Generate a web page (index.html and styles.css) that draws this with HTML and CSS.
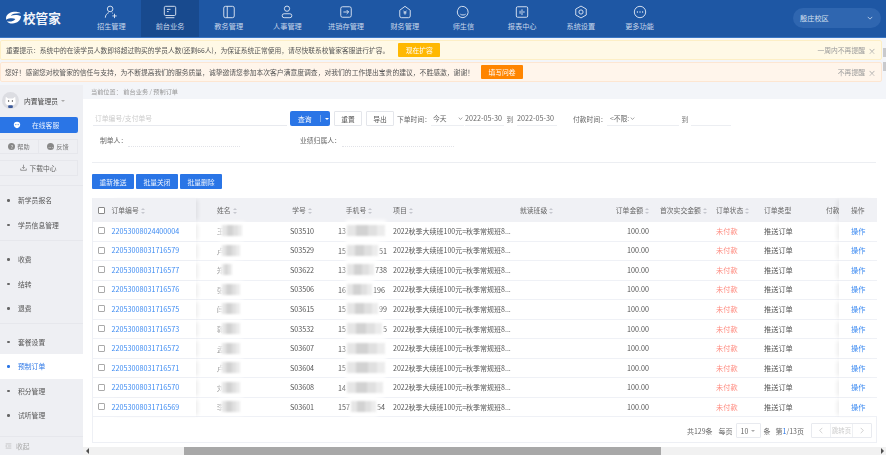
FILE: index.html
```html
<!DOCTYPE html>
<html lang="zh-CN">
<head>
<meta charset="utf-8">
<title>预制订单</title>
<link rel="stylesheet" href="styles.css">
</head>
<body>
<div class="app">
  <header class="topbar">
    <div class="logo">
      <svg class="logo-mark" viewBox="0 0 18 14"><path d="M1 7C2 2.500 7 .5 13 1c2 .2 3.500.8 4 1.500C13 2 8 2.500 6 5c3-1 8-1.200 11 .5C17 10 13 13.500 8 13.500 5 13.500 3 12.500 2 11c3 .8 7 .3 9-2.500C8 7.500 4 7.800 1 9.500z" fill="#fff"/></svg>
      <span class="logo-text">校管家</span>
    </div>
    <nav class="nav">
      <a class="nav-item"><svg viewBox="0 0 16 16"><circle cx="7" cy="4.500" r="3.200"/><path d="M1.500 14.500c0-3 2-5 4-5.800M10 9.500c-.3-.4-.6-.7-1-.9M9.500 12.500h5M12 10v5"/></svg><span>招生管理</span></a>
      <a class="nav-item active"><svg viewBox="0 0 16 16"><rect x="1.500" y="1.500" width="13" height="10.500" rx="1.500"/><path d="M4.500 5h4M4.500 7.500h2M3 14.500h10"/></svg><span>前台业务</span></a>
      <a class="nav-item"><svg viewBox="0 0 16 16"><rect x="2" y="1.500" width="12" height="13" rx="2"/><path d="M6 1.500v13"/></svg><span>教务管理</span></a>
      <a class="nav-item"><svg viewBox="0 0 16 16"><circle cx="8" cy="4.200" r="3"/><rect x="2.500" y="10" width="11" height="4.500" rx="2.200"/></svg><span>人事管理</span></a>
      <a class="nav-item"><svg viewBox="0 0 16 16"><rect x="2" y="2" width="12" height="12" rx="2"/><path d="M5 8h6M8.800 5.800 11 8l-2.200 2.200"/></svg><span>进销存管理</span></a>
      <a class="nav-item"><svg viewBox="0 0 16 16"><path d="M8 1.500 14 6v6.500a2 2 0 0 1-2 2H4a2 2 0 0 1-2-2V6z"/><path d="M6.300 6.500 8 8.500l1.700-2M6.300 9h3.400M8 8.500V11"/></svg><span>财务管理</span></a>
      <a class="nav-item"><svg viewBox="0 0 16 16"><path d="M3.500 2.800A6.500 6.500 0 1 1 8 14.500 6.500 6.500 0 0 1 1.500 8c0-1.200.4-2.300 1-3.200z"/><path d="M5 10.500c1.500 1.200 4.500 1.200 6 0"/></svg><span>师生信</span></a>
      <a class="nav-item"><svg viewBox="0 0 16 16"><rect x="1.500" y="2" width="13" height="12" rx="1.500"/><path d="M5.800 6.500v3.500M8 5v6.500M10.200 7v2"/></svg><span>报表中心</span></a>
      <a class="nav-item"><svg viewBox="0 0 16 16"><path d="M8 1.200 14 4.600v6.800L8 14.800 2 11.400V4.600z"/><circle cx="8" cy="8" r="2.400"/></svg><span>系统设置</span></a>
      <a class="nav-item"><svg viewBox="0 0 16 16"><circle cx="8" cy="8" r="6.500"/><path class="dots" d="M5 8h.01M8 8h.01M11 8h.01"/></svg><span>更多功能</span></a>
    </nav>
    <div class="campus"><span>殷庄校区</span><svg viewBox="0 0 8 5"><path d="M1 1l3 3 3-3"/></svg></div>
  </header>

  <section class="notices">
    <div class="notice-list">
      <div class="notice notice-yellow">
        <span>重要提示：系统中的在读学员人数即将超过购买的学员人数(还剩66人)，为保证系统正常使用，请尽快联系校管家客服进行扩容。</span>
        <button class="notice-btn btn-yellow">现在扩容</button>
        <span class="notice-close">一周内不再提醒<i>×</i></span>
      </div>
      <div class="notice notice-orange">
        <span>您好！感谢您对校管家的信任与支持，为不断提高我们的服务质量，诚挚邀请您参加本次客户满意度调查，对我们的工作提出宝贵的建议，不胜感激，谢谢！</span>
        <button class="notice-btn btn-orange">填写问卷</button>
        <span class="notice-close">不再提醒<i>×</i></span>
      </div>
    </div>
    <div class="notice-scroll"><i></i><i></i></div>
  </section>

  <div class="workspace">
    <aside class="side">
      <div class="user">
        <svg class="avatar" viewBox="0 0 18 18"><circle cx="9" cy="9" r="9" fill="#dcdde2"/><path d="M4 5l2.500 2h5L14 5l.5 6c0 2-2.500 3-5.500 3s-5.500-1-5.500-3z" fill="#fff"/><circle cx="7" cy="9.500" r=".7" fill="#333"/><circle cx="11" cy="9.500" r=".7" fill="#333"/><rect x="6.500" y="14" width="5" height="3" rx="1" fill="#3c5a9a"/></svg>
        <span class="user-name">内置管理员</span><i class="caret-down"></i>
      </div>
      <button class="service"><svg viewBox="0 0 10 10"><path d="M5 .8a4 4 0 0 1 4 4c0 2.300-1.800 4.200-4 4.200S1 7.100 1 4.800a4 4 0 0 1 4-4z" fill="#fff"/><circle cx="3.600" cy="4.500" r=".7" fill="#2a75e6"/><circle cx="6.400" cy="4.500" r=".7" fill="#2a75e6"/></svg><span>在线客服</span></button>
      <div class="help-row">
        <span class="help-cell"><i class="dot-icon">?</i>帮助</span>
        <span class="help-cell"><i class="dot-icon">…</i>反馈</span>
      </div>
      <div class="download"><svg viewBox="0 0 10 10"><path d="M5 1v5M3 4.500 5 6.500l2-2M1 6.500V9h8V6.500"/></svg>下载中心</div>
      <ul class="menu menu-first">
        <li>新学员报名</li>
        <li>学员信息管理</li>
      </ul>
      <ul class="menu">
        <li>收费</li>
        <li>结转</li>
        <li>退费</li>
      </ul>
      <ul class="menu menu-last">
        <li>套餐设置</li>
        <li class="current">预制订单</li>
        <li>积分管理</li>
        <li>试听管理</li>
      </ul>
      <div class="collapse"><svg viewBox="0 0 10 8"><path d="M1 1h8M4 4h5M1 7h8M2.500 2.800 1 4l1.500 1.200"/></svg>收起</div>
    </aside>

    <main class="main">
      <div class="crumbs">当前位置： 前台业务 / 预制订单</div>
      <div class="panel">
        <div class="filter-row">
          <div class="search-input">订单编号/支付单号</div>
          <button class="btn-query"><span>查询</span><i class="sep"></i><i class="caret-white"></i></button>
          <button class="btn-plain">重置</button>
          <button class="btn-plain">导出</button>
          <span class="f-label f-order">下单时间：</span>
          <span class="f-select f-today">今天<svg viewBox="0 0 8 5"><path d="M1 1l3 3 3-3"/></svg></span>
          <span class="f-date">2022-05-30</span>
          <span class="f-to">到</span>
          <span class="f-date f-date2">2022-05-30</span>
          <span class="f-label f-pay">付款时间：</span>
          <span class="f-select f-any">&lt;不限:<svg viewBox="0 0 8 5"><path d="M1 1l3 3 3-3"/></svg></span>
          <span class="f-to f-to2">到</span>
          <span class="f-end"></span>
        </div>
        <div class="filter-row2">
          <span class="f-label f-maker">制单人：</span><span class="dash"></span>
          <span class="f-label f-owner">业绩归属人：</span><span class="dash"></span>
        </div>
        <div class="actions">
          <button class="btn-blue">重新推送</button>
          <button class="btn-blue">批量关闭</button>
          <button class="btn-blue">批量删除</button>
        </div>
        <div class="table-box">
          <table class="grid">
            <colgroup><col class="c1"><col class="c2"><col class="c3"><col class="c4"><col class="c5"><col class="c6"><col class="c7"><col class="c8"><col class="c9"><col class="c10"><col class="c11"><col class="c12"><col class="c13"></colgroup>
            <thead>
              <tr>
                <th class="chk"><i class="box dark"></i></th>
                <th class="no fix-l">订单编号<i class="sort"></i></th>
                <th class="nm">姓名<i class="sort"></i></th>
                <th class="ctr">学号<i class="sort"></i></th>
                <th class="ctr">手机号<i class="sort"></i></th>
                <th class="pj">项目<i class="sort"></i></th>
                <th>就读班级<i class="sort"></i></th>
                <th class="rt">订单金额<i class="sort"></i></th>
                <th class="fp">首次实交金额<i class="sort"></i></th>
                <th>订单状态<i class="sort"></i></th>
                <th>订单类型</th>
                <th>付款时间</th>
                <th class="op fix-r">操作</th>
              </tr>
            </thead>
            <tbody>
              <tr><td class="chk"><i class="box"></i></td><td class="no fix-l"><a>22053008024400004</a></td><td class="nm">王<i class="mask w18"></i></td><td class="ctr">S03510</td><td class="ph">13<i class="mask w36"></i></td><td class="pj">2022秋季大续班100元=秋季常规班8...</td><td></td><td class="rt">100.00</td><td></td><td class="st">未付款</td><td>推送订单</td><td></td><td class="op fix-r"><a>操作</a></td></tr>
              <tr><td class="chk"><i class="box"></i></td><td class="no fix-l"><a>22053008031716579</a></td><td class="nm">卢<i class="mask w16"></i></td><td class="ctr">S03529</td><td class="ph">15<i class="mask w28"></i>51</td><td class="pj">2022秋季大续班100元=秋季常规班8...</td><td></td><td class="rt">100.00</td><td></td><td class="st">未付款</td><td>推送订单</td><td></td><td class="op fix-r"><a>操作</a></td></tr>
              <tr><td class="chk"><i class="box"></i></td><td class="no fix-l"><a>22053008031716577</a></td><td class="nm">郑<i class="mask w10"></i></td><td class="ctr">S03622</td><td class="ph">13<i class="mask w24"></i>738</td><td class="pj">2022秋季大续班100元=秋季常规班8...</td><td></td><td class="rt">100.00</td><td></td><td class="st">未付款</td><td>推送订单</td><td></td><td class="op fix-r"><a>操作</a></td></tr>
              <tr><td class="chk"><i class="box"></i></td><td class="no fix-l"><a>22053008031716576</a></td><td class="nm">张<i class="mask w16"></i></td><td class="ctr">S03506</td><td class="ph">16<i class="mask w22"></i>196</td><td class="pj">2022秋季大续班100元=秋季常规班8...</td><td></td><td class="rt">100.00</td><td></td><td class="st">未付款</td><td>推送订单</td><td></td><td class="op fix-r"><a>操作</a></td></tr>
              <tr><td class="chk"><i class="box"></i></td><td class="no fix-l"><a>22053008031716575</a></td><td class="nm">闫<i class="mask w16"></i></td><td class="ctr">S03615</td><td class="ph">15<i class="mask w28"></i>99</td><td class="pj">2022秋季大续班100元=秋季常规班8...</td><td></td><td class="rt">100.00</td><td></td><td class="st">未付款</td><td>推送订单</td><td></td><td class="op fix-r"><a>操作</a></td></tr>
              <tr><td class="chk"><i class="box"></i></td><td class="no fix-l"><a>22053008031716573</a></td><td class="nm">郭<i class="mask w16"></i></td><td class="ctr">S03532</td><td class="ph">15<i class="mask w32"></i>5</td><td class="pj">2022秋季大续班100元=秋季常规班8...</td><td></td><td class="rt">100.00</td><td></td><td class="st">未付款</td><td>推送订单</td><td></td><td class="op fix-r"><a>操作</a></td></tr>
              <tr><td class="chk"><i class="box"></i></td><td class="no fix-l"><a>22053008031716572</a></td><td class="nm">孟<i class="mask w16"></i></td><td class="ctr">S03607</td><td class="ph">13<i class="mask w36"></i></td><td class="pj">2022秋季大续班100元=秋季常规班8...</td><td></td><td class="rt">100.00</td><td></td><td class="st">未付款</td><td>推送订单</td><td></td><td class="op fix-r"><a>操作</a></td></tr>
              <tr><td class="chk"><i class="box"></i></td><td class="no fix-l"><a>22053008031716571</a></td><td class="nm">卢<i class="mask w16"></i></td><td class="ctr">S03604</td><td class="ph">15<i class="mask w36"></i></td><td class="pj">2022秋季大续班100元=秋季常规班8...</td><td></td><td class="rt">100.00</td><td></td><td class="st">未付款</td><td>推送订单</td><td></td><td class="op fix-r"><a>操作</a></td></tr>
              <tr><td class="chk"><i class="box"></i></td><td class="no fix-l"><a>22053008031716570</a></td><td class="nm">刘<i class="mask w16"></i></td><td class="ctr">S03608</td><td class="ph">14<i class="mask w34"></i></td><td class="pj">2022秋季大续班100元=秋季常规班8...</td><td></td><td class="rt">100.00</td><td></td><td class="st">未付款</td><td>推送订单</td><td></td><td class="op fix-r"><a>操作</a></td></tr>
              <tr><td class="chk"><i class="box"></i></td><td class="no fix-l"><a>22053008031716569</a></td><td class="nm">李<i class="mask w16"></i></td><td class="ctr">S03601</td><td class="ph">157<i class="mask w22"></i>54</td><td class="pj">2022秋季大续班100元=秋季常规班8...</td><td></td><td class="rt">100.00</td><td></td><td class="st">未付款</td><td>推送订单</td><td></td><td class="op fix-r"><a>操作</a></td></tr>
            </tbody>
          </table>
          <div class="pager">
            <span>共129条</span>
            <span class="pg-per">每页</span>
            <span class="pg-size">10<i class="caret-down"></i></span>
            <span class="pg-unit">条</span>
            <span class="pg-page">第<b>1</b>/13页</span>
            <span class="pg-nav">
              <i class="pg-arrow"><svg viewBox="0 0 6 10"><path d="M5 1 1 5l4 4"/></svg></i>
              <i class="pg-jump">跳转页</i>
              <i class="pg-arrow"><svg viewBox="0 0 6 10"><path d="M1 1l4 4-4 4"/></svg></i>
            </span>
          </div>
        </div>
      </div>
      <div class="hscroll">
        <svg class="hs-arrow" viewBox="0 0 6 8"><path d="M5 0v8L1 4z"/></svg>
        <div class="hs-track"><div class="hs-thumb"></div></div>
        <svg class="hs-arrow" viewBox="0 0 6 8"><path d="M1 0v8l4-4z"/></svg>
      </div>
    </main>
  </div>
</div>
</body>
</html>
```

FILE: styles.css
```css
* { box-sizing: border-box; }
html, body { margin: 0; padding: 0; height: 100%; overflow: hidden; }
body {
  font-family: "Noto Sans CJK SC", "Noto Sans", "Liberation Sans", sans-serif;
  font-size: 7.2px;
  color: #555;
  background: #f3f5f9;
}
i { font-style: normal; }
button { font-family: inherit; padding: 0; cursor: pointer; }
ul { list-style: none; margin: 0; padding: 0; }

.app { display: flex; flex-direction: column; height: 455px; filter: blur(.4px); }

/* top bar */
.topbar {
  display: flex; align-items: stretch; height: 37.500px; flex: none;
  background: #1e57a4; border-bottom: 1px solid #3a76c4; color: #fff;
}
.logo { width: 82px; flex: none; display: flex; align-items: center; padding-left: 5px; padding-bottom: 1px; }
.logo-mark { width: 17px; height: 13px; }
.logo-text { font-size: 12.600px; font-weight: 700; margin-left: 1px; color: #f2f5fa; }
.nav { display: flex; }
.nav-item {
  width: 58.700px; display: flex; flex-direction: column; align-items: center;
  padding-top: 5px; color: #c7d6ea; font-size: 7.200px; line-height: 10px;
}
.nav-item svg {
  width: 14px; height: 14px; margin-bottom: 2px;
  fill: none; stroke: #e8eef7; stroke-width: 1;
}
.nav-item svg .dots { stroke-width: 1.500; stroke-linecap: round; }
.nav-item.active { background: #184a8e; }
.campus {
  width: 88px; height: 20px; margin: 8px 0 0 auto; margin-right: 5px;
  display: flex; align-items: center; justify-content: space-between;
  padding: 0 8px 0 7px; border-radius: 10px;
  background: #2f66b0; color: #d5e0ef; font-size: 7.200px;
}
.campus svg { width: 6px; height: 4px; fill: none; stroke: #d5e0ef; stroke-width: 1; }

/* notices */
.notices { display: flex; flex: none; height: 47px; padding-top: 2.500px; }
.notice-list { flex: 1; display: flex; flex-direction: column; gap: 2px; padding-right: 1px; }
.notice {
  height: 20px; display: flex; align-items: center;
  padding: 0 5px; border-radius: 2px; font-size: 6.760px; color: #555;
}
.notice-yellow { background: #fff9e6; border: 1px solid #fdefc5; }
.notice-orange { background: #fff5eb; border: 1px solid #fde6d2; padding-left: 4px; font-size: 6.810px; }
.notice-btn { width: 42px; height: 14px; border: 0; border-radius: 1px; color: #fff; font-size: 6.800px; }
.btn-yellow { background: #ffb800; margin-left: 9px; }
.btn-orange { background: #ff8500; margin-left: 7px; }
.notice-close { margin-left: auto; color: #9a9a9a; font-size: 6.800px; display: flex; align-items: center; }
.notice-close i { margin-left: 3px; font-size: 8px; color: #aaa; }
.notice-scroll { width: 3px; flex: none; display: flex; flex-direction: column; gap: 5px; padding-top: 8px; }
.notice-scroll i { height: 9px; background: #c8c9cc; }

/* layout */
.workspace { flex: 1; display: flex; min-height: 0; }

/* sidebar */
.side { width: 83px; flex: none; background: #eeeff3; display: flex; flex-direction: column; padding-top: 7px; position: relative; }
.user { display: flex; align-items: center; height: 18px; padding-left: 2px; font-size: 6.800px; color: #444; }
.avatar { width: 17px; height: 17px; flex: none; }
.user-name { margin-left: 5px; }
.caret-down { display: inline-block; width: 0; height: 0; margin-left: 3px; border: 2.500px solid transparent; border-top-color: #aaa; border-bottom: 0; }
.service {
  width: 78px; height: 16px; margin-top: 7.500px; flex: none; border: 0; border-radius: 0 2px 2px 0;
  background: #2a75e6; color: #e6f0ff; font-size: 6.800px;
  display: flex; align-items: center; padding-left: 13px;
}
.service svg { width: 8px; height: 8px; margin-right: 11px; }
.help-row { width: 78px; height: 15px; margin-top: 5.500px; flex: none; display: flex; border: 1px solid #e6e7ec; border-left: 0; }
.help-cell { flex: 1; display: flex; align-items: center; justify-content: center; font-size: 6.200px; color: #777; }
.help-cell + .help-cell { border-left: 1px solid #e6e7ec; }
.dot-icon { width: 7px; height: 7px; margin-right: 2px; border-radius: 50%; background: #888; color: #eee; font-size: 5px; line-height: 7px; text-align: center; }
.download {
  width: 78px; height: 16px; margin-top: 6px; flex: none; display: flex; align-items: center; justify-content: center;
  border: 1px solid #e6e7ec; border-left: 0; font-size: 6.800px; color: #666;
}
.download svg { width: 7px; height: 7px; margin-right: 2px; fill: none; stroke: #666; stroke-width: .9; }
.menu { border-top: 1px solid #e6e7ec; padding: 6px 0 2.500px; font-size: 6.800px; color: #555; }
.menu-first { margin-top: 9px; padding: 2.500px 0 3px; }
.menu-last { padding-top: 5.500px; }
.menu li { height: 24.500px; line-height: 24.500px; padding-left: 18px; position: relative; }
.menu li::before { content: ""; position: absolute; left: 7px; top: 11px; width: 2.500px; height: 2.500px; border-radius: 50%; background: #666; }
.menu li.current { background: #fff; color: #2a75e6; }
.menu li.current::before { background: #2a75e6; }
.collapse {
  margin-top: auto; height: 19px; border-top: 1px solid #e6e7ec;
  display: flex; align-items: center; padding-left: 5px; color: #aaa; font-size: 6.800px;
}
.collapse svg { width: 7px; height: 6px; margin-right: 4px; fill: none; stroke: #aaa; stroke-width: .8; }

/* main */
.main { flex: 1; min-width: 0; display: flex; flex-direction: column; background: #fff; }
.crumbs { height: 14.500px; flex: none; padding-left: 8px; background: #f3f5f9; font-size: 6.200px; line-height: 13px; color: #999; }
.panel { flex: 1; min-height: 0; padding: 12px 10px 0 9px; overflow: hidden; }

.filter-row { display: flex; align-items: center; height: 15px; white-space: nowrap; }
.search-input { width: 194px; height: 15px; margin: 0 3px 0 1px; padding-left: 2px; border-bottom: 1px solid #e8eaef; line-height: 14px; color: #ccc; font-size: 6.800px; }
.btn-query {
  width: 40px; height: 15px; border: 0; border-radius: 2px; background: #2a75e6; color: #fff; font-size: 6.800px;
  display: flex; align-items: center; padding-left: 8px;
}
.btn-query .sep { width: 1px; height: 7px; margin-left: 8px; background: #7aa9ee; }
.caret-white { width: 0; height: 0; margin-left: 4px; border: 2.500px solid transparent; border-top-color: #fff; border-bottom: 0; }
.btn-plain { width: 28px; height: 15px; margin-left: 4px; border: 1px solid #e4e6eb; border-radius: 1px; background: #fff; color: #555; font-size: 6.800px; }
.f-label { font-size: 6.800px; color: #666; }
.f-order { margin-left: 3px; width: 34px; }
.f-select { display: flex; align-items: center; justify-content: space-between; height: 14px; border-bottom: 1px solid #eceef2; font-size: 6.800px; color: #666; }
.f-select svg { width: 5px; height: 3px; fill: none; stroke: #555; stroke-width: .9; }
.f-today { width: 33px; padding: 0 1px 0 2px; }
.f-date { width: 39px; height: 14px; margin-left: 1px; border-bottom: 1px solid #eceef2; color: #666; font-size: 7.200px; line-height: 13px; }
.f-to { width: 12px; text-align: center; font-size: 6.800px; color: #777; }
.f-date2 { margin-left: 1px; padding-left: 0; width: 40px; }
.f-pay { margin-left: 16px; width: 34px; }
.f-any { width: 72px; justify-content: flex-start; padding-left: 3px; }
.f-any svg { margin-left: 1px; }
.f-to2 { width: 12px; }
.f-end { width: 40px; height: 14px; border-bottom: 1px solid #eceef2; }

.filter-row2 { display: flex; align-items: center; height: 14px; margin-top: 7px; padding-left: 8px; }
.f-maker { width: 28px; }
.dash { width: 112px; height: 14px; border-bottom: 1px dotted #e2e3e8; }
.f-owner { width: 42px; margin-left: 60px; }

.actions { margin-top: 15px; padding-top: 11px; border-top: 1px solid #eceef2; display: flex; gap: 2px; }
.btn-blue { width: 42px; height: 15px; border: 0; border-radius: 1px; background: #2a75e6; color: #e9f1fd; font-size: 6.800px; }

/* table */
.table-box { margin-top: 9px; width: 785px; height: 244.500px; border: 1px solid #eef0f5; border-top: 0; position: relative; }
.grid { width: 784px; table-layout: fixed; border-collapse: separate; border-spacing: 0; }
.c1 { width: 15px; } .c2 { width: 88px; } .c3 { width: 77px; } .c4 { width: 58px; }
.c5 { width: 56px; } .c6 { width: 129px; } .c7 { width: 85px; } .c8 { width: 52px; }
.c9 { width: 59px; } .c10 { width: 48px; } .c11 { width: 62px; } .c12 { width: 17px; } .c13 { width: 38px; }
.grid th, .grid td { padding: 0 0 0 4px; text-align: left; white-space: nowrap; overflow: hidden; font-weight: 400; line-height: 10px; }
.grid th { height: 24px; background: #f0f1f5; color: #666; font-size: 6.800px; }
.grid td { height: 19.550px; padding-bottom: 1px; border-bottom: 1px solid #eff1f6; background: #fff; color: #555; }
.grid a { color: #3d8bf2; }
.grid .chk { padding-left: 5px; }
.grid .no { padding-left: 0; }
.grid .no a { padding-left: 3.500px; }
.grid th.no { padding-left: 3.500px; }
.grid .nm { padding-left: 21px; overflow: visible; }
.grid .ctr { text-align: center; padding-left: 0; padding-right: 0; }
.grid .ph { padding-left: 7px; overflow: visible; }
.grid .pj { padding-left: 6px; font-size: 7px; }
.grid .rt { text-align: right; padding-left: 0; padding-right: 4px; }
.grid .fp { padding-left: 7px; }
.grid .st { color: #ff8d82; }
.grid .op { padding-left: 12px; }
.fix-l { position: relative; box-shadow: 4px 0 4px -2px rgba(0, 0, 0, .07); z-index: 1; }
.grid th.fix-l, .grid td.fix-l { overflow: visible; }
.fix-r { position: relative; box-shadow: -4px 0 4px -2px rgba(0, 0, 0, .07); }
.box { display: block; width: 7px; height: 7px; border: 1px solid #aaa; border-radius: 1px; background: #fff; }
.box.dark { border-color: #888; }
.sort { display: inline-block; width: 4px; height: 6px; margin-left: 2px; position: relative; vertical-align: -.5px; }
.sort::before, .sort::after { content: ""; position: absolute; left: 0; border: 2px solid transparent; }
.sort::before { top: 0; border-bottom: 2px solid #c6c8cf; border-top: 0; }
.sort::after { bottom: 0; border-top: 2px solid #c6c8cf; border-bottom: 0; }

.mask {
  display: inline-block; height: 11px; vertical-align: -2.500px; position: relative; z-index: 2;
  background: linear-gradient(90deg, #e6e6e6 0 25%, #d2d2d2 25% 55%, #e0e0e0 55% 80%, #ececec 80%);
  box-shadow: 0 0 3px 3px rgba(255, 255, 255, .95);
  filter: blur(.8px);
  margin: 0 1px 0 -2px;
}
.grid .ph .mask { margin: 0 1px; box-shadow: 0 4px 3px 1px rgba(255, 255, 255, .95), 0 -4px 3px 1px rgba(255, 255, 255, .95); }
.w10 { width: 10px; } .w16 { width: 18px; } .w18 { width: 20px; } .w22 { width: 25px; } .w24 { width: 27px; }
.w28 { width: 31px; } .w32 { width: 35px; } .w34 { width: 36px; } .w36 { width: 38px; }

/* pagination */
.pager { position: absolute; right: 4px; top: 225px; height: 15px; display: flex; align-items: center; color: #666; font-size: 7px; }
.pg-per { margin-left: 6px; }
.pg-size { width: 25px; height: 15px; margin-left: 3px; padding-left: 4px; border: 1px solid #e8eaef; border-radius: 1px; display: flex; align-items: center; }
.pg-unit { margin-left: 3px; }
.pg-page { margin-left: 5px; }
.pg-page b { font-weight: 400; color: #2a75e6; }
.pg-nav { display: flex; margin-left: 7px; height: 15px; border: 1px solid #e8eaef; border-radius: 1px; }
.pg-arrow { width: 18px; display: flex; align-items: center; justify-content: center; }
.pg-arrow svg { width: 4px; height: 7px; fill: none; stroke: #aaa; stroke-width: .8; }
.pg-jump { width: 23px; text-align: center; line-height: 13px; color: #ccc; font-size: 6.400px; border: solid #eef0f3; border-width: 0 1px; }

/* horizontal scrollbar */
.hscroll { height: 8px; flex: none; display: flex; background: #f1f1f1; align-items: center; }
.hs-arrow { width: 5px; height: 6px; flex: none; margin: 0 1.500px; fill: #505050; }
.hs-track { flex: 1; height: 8px; padding-left: 93px; padding-right: 217px; }
.hs-thumb { height: 8px; background: #a8a8a8; }
```
